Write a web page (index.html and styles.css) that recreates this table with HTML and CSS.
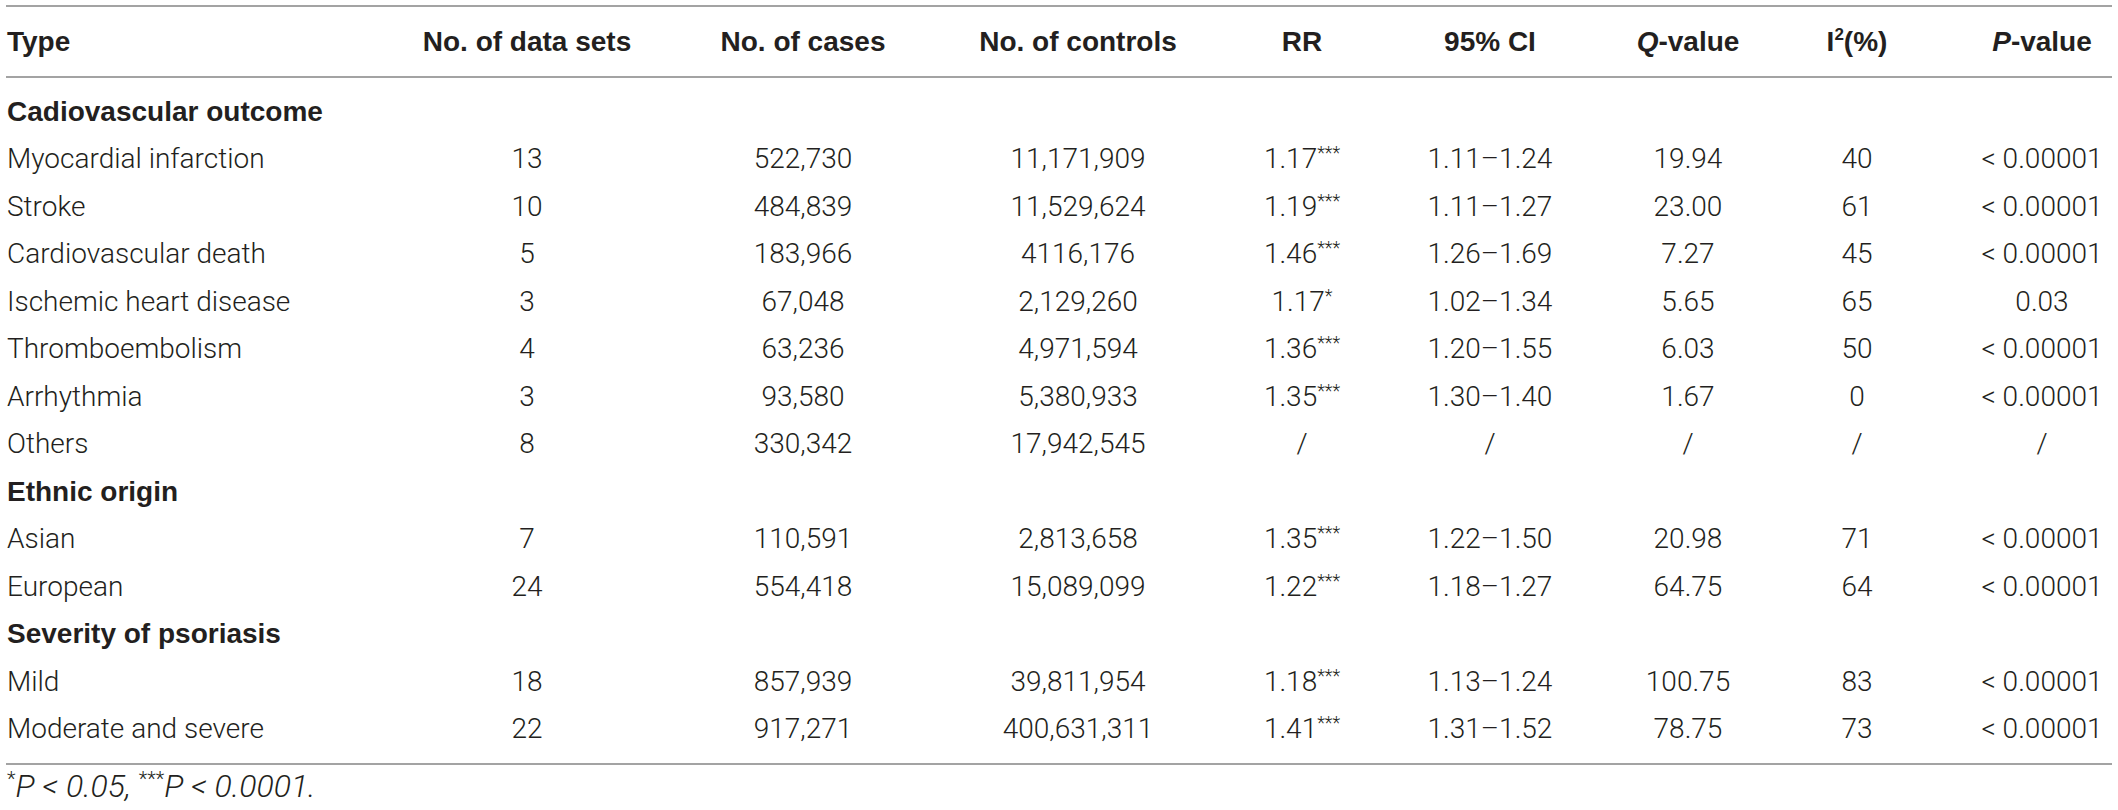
FILE: index.html
```html
<!DOCTYPE html>
<html>
<head>
<meta charset="utf-8">
<link rel="stylesheet" href="styles.css">
</head>
<body>
<div class="table">
  <div class="row head">
    <div class="c first">Type</div>
    <div class="c">No. of data sets</div>
    <div class="c">No. of cases</div>
    <div class="c">No. of controls</div>
    <div class="c">RR</div>
    <div class="c">95% CI</div>
    <div class="c"><i>Q</i>-value</div>
    <div class="c">I<sup class="sq">2</sup>(%)</div>
    <div class="c last"><i>P</i>-value</div>
  </div>
  <div class="body">
    <div class="row group"><div class="c first">Cadiovascular outcome</div></div>
    <div class="row"><div class="c first">Myocardial infarction</div><div class="c">13</div><div class="c">522,730</div><div class="c">11,171,909</div><div class="c">1.17<sup class="st">***</sup></div><div class="c">1.11–1.24</div><div class="c">19.94</div><div class="c">40</div><div class="c last">&lt; 0.00001</div></div>
    <div class="row"><div class="c first">Stroke</div><div class="c">10</div><div class="c">484,839</div><div class="c">11,529,624</div><div class="c">1.19<sup class="st">***</sup></div><div class="c">1.11–1.27</div><div class="c">23.00</div><div class="c">61</div><div class="c last">&lt; 0.00001</div></div>
    <div class="row"><div class="c first">Cardiovascular death</div><div class="c">5</div><div class="c">183,966</div><div class="c">4116,176</div><div class="c">1.46<sup class="st">***</sup></div><div class="c">1.26–1.69</div><div class="c">7.27</div><div class="c">45</div><div class="c last">&lt; 0.00001</div></div>
    <div class="row"><div class="c first">Ischemic heart disease</div><div class="c">3</div><div class="c">67,048</div><div class="c">2,129,260</div><div class="c">1.17<sup class="st">*</sup></div><div class="c">1.02–1.34</div><div class="c">5.65</div><div class="c">65</div><div class="c last">0.03</div></div>
    <div class="row"><div class="c first">Thromboembolism</div><div class="c">4</div><div class="c">63,236</div><div class="c">4,971,594</div><div class="c">1.36<sup class="st">***</sup></div><div class="c">1.20–1.55</div><div class="c">6.03</div><div class="c">50</div><div class="c last">&lt; 0.00001</div></div>
    <div class="row"><div class="c first">Arrhythmia</div><div class="c">3</div><div class="c">93,580</div><div class="c">5,380,933</div><div class="c">1.35<sup class="st">***</sup></div><div class="c">1.30–1.40</div><div class="c">1.67</div><div class="c">0</div><div class="c last">&lt; 0.00001</div></div>
    <div class="row"><div class="c first">Others</div><div class="c">8</div><div class="c">330,342</div><div class="c">17,942,545</div><div class="c">/</div><div class="c">/</div><div class="c">/</div><div class="c">/</div><div class="c last">/</div></div>
    <div class="row group"><div class="c first">Ethnic origin</div></div>
    <div class="row"><div class="c first">Asian</div><div class="c">7</div><div class="c">110,591</div><div class="c">2,813,658</div><div class="c">1.35<sup class="st">***</sup></div><div class="c">1.22–1.50</div><div class="c">20.98</div><div class="c">71</div><div class="c last">&lt; 0.00001</div></div>
    <div class="row"><div class="c first">European</div><div class="c">24</div><div class="c">554,418</div><div class="c">15,089,099</div><div class="c">1.22<sup class="st">***</sup></div><div class="c">1.18–1.27</div><div class="c">64.75</div><div class="c">64</div><div class="c last">&lt; 0.00001</div></div>
    <div class="row group"><div class="c first">Severity of psoriasis</div></div>
    <div class="row"><div class="c first">Mild</div><div class="c">18</div><div class="c">857,939</div><div class="c">39,811,954</div><div class="c">1.18<sup class="st">***</sup></div><div class="c">1.13–1.24</div><div class="c">100.75</div><div class="c">83</div><div class="c last">&lt; 0.00001</div></div>
    <div class="row"><div class="c first">Moderate and severe</div><div class="c">22</div><div class="c">917,271</div><div class="c">400,631,311</div><div class="c">1.41<sup class="st">***</sup></div><div class="c">1.31–1.52</div><div class="c">78.75</div><div class="c">73</div><div class="c last">&lt; 0.00001</div></div>
  </div>
</div>
<p class="note"><span class="fst">*</span>P &lt; 0.05, <span class="fst">***</span>P &lt; 0.0001.</p>
</body>
</html>
```
FILE: styles.css
```css
html, body {
  margin: 0;
  padding: 0;
  background: #ffffff;
}
body {
  font-family: Roboto, "Liberation Sans", Arial, sans-serif;
  font-weight: 300;
  font-size: 28px;
  color: #231f20;
}
.table {
  margin: 5px 0 0 6px;
  width: 2106px;
  border-top: 2px solid #a3a3a3;
  border-bottom: 2px solid #a3a3a3;
}
.row {
  display: grid;
  grid-template-columns: 384px 274px 278px 272px 176px 200px 196px 142px 184px;
  align-items: center;
  height: 47.5px;
  line-height: 32px;
  white-space: nowrap;
}
.head {
  height: 69px;
  border-bottom: 2px solid #a3a3a3;
  font-family: "Liberation Sans", Arial, sans-serif;
  font-weight: 700;
}
.body {
  padding: 10px 0 10px;
}
.c {
  text-align: center;
}
.c.first {
  text-align: left;
  padding-left: 1px;
}
.c.last {
  padding-left: 44px;
}
.group .c.first {
  font-family: "Liberation Sans", Arial, sans-serif;
  font-weight: 700;
  grid-column: 1 / span 3;
}
.st {
  font-size: 18px;
  vertical-align: 9px;
  line-height: 0;
}
.sq {
  font-size: 17px;
  vertical-align: 11px;
  line-height: 0;
}
.note {
  margin: 5px 0 0 7px;
  font-size: 32px;
  font-style: italic;
  line-height: 32px;
}
.fst {
  font-style: normal;
  font-size: 20px;
  vertical-align: 11px;
  line-height: 0;
}
```
